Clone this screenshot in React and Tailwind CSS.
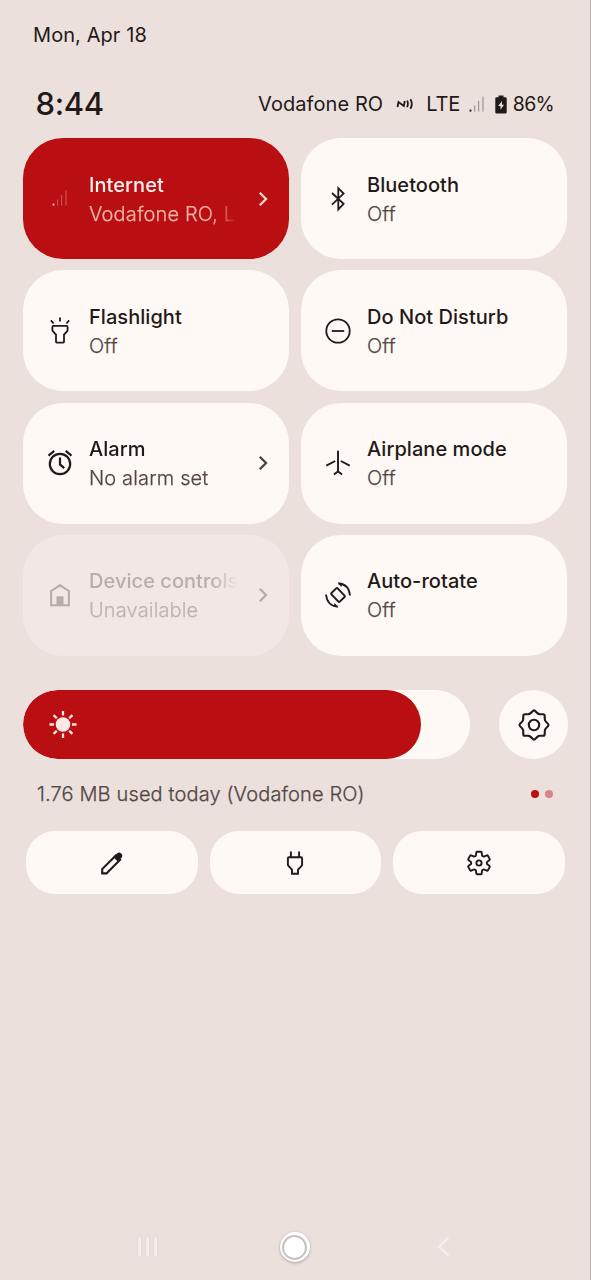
import React from "react";

function Icon({ size = 28, sw = 1.8, className = "", children }) {
  return (
    <svg
      width={size}
      height={size}
      viewBox={`0 0 ${size} ${size}`}
      fill="none"
      stroke="currentColor"
      strokeWidth={sw}
      className={`block shrink-0 ${className}`}
    >
      {children}
    </svg>
  );
}

const Signal = () => (
  <svg width="16" height="17" viewBox="0 0 16 17" fill="currentColor" className="block shrink-0">
    <rect x="0.6" y="13.6" width="1.8" height="2" />
    <rect x="5" y="9.4" width="1.2" height="6.2" opacity=".38" />
    <rect x="9" y="5" width="1.2" height="10.6" opacity=".38" />
    <rect x="13.4" y="0.5" width="1.2" height="15.1" opacity=".38" />
  </svg>
);

const Bluetooth = () => (
  <Icon sw={1.8}>
    <path d="M8 8l11.600 10.800-5.300 5.600V3.200l5.300 5.400L8 19.600" />
  </Icon>
);

const Flashlight = () => (
  <Icon>
    <path d="M7.400 8.900h13.200q1 0 1 1v3.200q0 .6-.4 1l-3.200 3.600v7q0 .9-.9.9h-6.200q-.9 0-.9-.9v-7l-3.200-3.600q-.4-.4-.4-1V9.900q0-1 1-1z" />
    <path d="M14 .6v3.800M4.900 3.300l2.700 3.200M23.100 3.300l-2.700 3.200" />
  </Icon>
);

const DoNotDisturb = () => (
  <Icon>
    <circle cx="14" cy="14" r="11.700" />
    <path d="M7.800 14h12.400" />
  </Icon>
);

const Alarm = () => (
  <Icon sw={2.2}>
    <circle cx="14" cy="15" r="10.200" />
    <path d="M2.500 6.600l5.800-4.700M25.500 6.600l-5.800-4.700M14 8.600v6.800l4.200 3.700" />
  </Icon>
);

const Airplane = () => (
  <Icon sw={1.9}>
    <path d="M14 1.800v21M2.300 16.600l8.900-4.600M25.700 16.600l-8.900-4.600M9.900 25.400l4.100-3 4.100 3" />
  </Icon>
);

const House = () => (
  <Icon sw={2}>
    <path d="M5.100 24.200V10L14 4.300 22.900 10v14.200z" />
    <path d="M10.500 15.300h7v9h-7z" fill="currentColor" stroke="none" />
  </Icon>
);

const AutoRotate = () => (
  <Icon sw={1.8}>
    <rect x="-6" y="-4.300" width="12" height="8.600" rx="1" transform="translate(14 14) rotate(46)" strokeWidth="2" />
    <path d="M14.500 2.500q10.300.6 11.500 12M2 13.500q1.200 11.400 11.500 12" />
    <path d="M13.600 1.600l5 .6-1.300 3.900zM14.400 26.400l-5-.6 1.300-3.900z" fill="currentColor" stroke="none" />
  </Icon>
);

const Sun = () => (
  <Icon sw={2.3}>
    <circle cx="14" cy="14.500" r="7.300" fill="currentColor" stroke="none" />
    <path d="M14 1v4.500M14 23.500v4.500M.5 14.500h4.500M23 14.500h4.500M4.600 5.100l3.200 3.200M20.200 20.700l3.200 3.200M23.400 5.100l-3.200 3.200M7.800 20.700l-3.200 3.200" />
  </Icon>
);

const at = (c, r, deg) => {
  const a = ((deg - 90) * Math.PI) / 180;
  return [c + r * Math.cos(a), c + r * Math.sin(a)];
};

// Closed polygon whose corners are softened by quadratic curves.
function softPath(points, t) {
  const n = points.length;
  const mix = (p, q, k) => `${(p[0] + (q[0] - p[0]) * k).toFixed(2)} ${(p[1] + (q[1] - p[1]) * k).toFixed(2)}`;
  return (
    points
      .map((p, i) => {
        const prev = points[(i + n - 1) % n];
        const next = points[(i + 1) % n];
        return `${i ? "L" : "M"}${mix(p, prev, t)}Q${p[0].toFixed(2)} ${p[1].toFixed(2)} ${mix(p, next, t)}`;
      })
      .join("") + "Z"
  );
}

const starPoints = Array.from({ length: 16 }, (_, i) => at(17, i % 2 ? 11.7 : 15.1, i * 22.5));
const gearPoints = Array.from({ length: 6 }, (_, i) => [
  at(14, 7.9, i * 60 - 23),
  at(14, 11.6, i * 60 - 13),
  at(14, 11.6, i * 60 + 13),
  at(14, 7.9, i * 60 + 23),
]).flat();

const StarGear = () => (
  <Icon size={34} sw={2.1}>
    <path d={softPath(starPoints, 0.25)} />
    <circle cx="17" cy="17" r="5.200" />
  </Icon>
);

const Gear = () => (
  <Icon sw={1.9}>
    <path d={softPath(gearPoints, 0.16)} />
    <circle cx="14" cy="14" r="2.600" />
  </Icon>
);

const Pencil = () => (
  <Icon sw={2.1}>
    <path d="M4.200 24.400v-4.300L17.800 6.500l4.300 4.300L8.500 24.400z" />
    <path d="M15.500 8.200l3.900-3.900q1.700-1.400 3.400 0l.9.900q1.400 1.700 0 3.400L19.800 12.500z" fill="currentColor" stroke="none" />
  </Icon>
);

const Plug = () => (
  <Icon sw={1.9}>
    <path d="M9.900 2.400v5.400M18.100 2.400v5.400M7.900 8.300h12.200q1 0 1 1v6.200q0 .8-.5 1.300L17 20.600v4.100h-6v-4.100l-3.600-3.800q-.5-.5-.5-1.300V9.300q0-1 1-1z" />
  </Icon>
);

const Nfc = () => (
  <svg width="18" height="12" viewBox="0 0 18 12" fill="none" stroke="currentColor" strokeWidth="1.800" className="block">
    <path d="M1.500 9l1-5 5.300 3.900L8.800 3M11.200 2.500q1.500 3.500-.2 6.700M14.400 1.200q2.900 4.800-.1 9.600" />
  </svg>
);

const Battery = () => (
  <svg width="12" height="19" viewBox="0 0 12 19" className="block">
    <path d="M3.500.4h5v1.900H10.500q1.200 0 1.200 1.200v13.800q0 1.200-1.200 1.200h-9q-1.200 0-1.200-1.200V3.500q0-1.200 1.200-1.200h2z" fill="currentColor" />
    <path d="M6.900 6.100L3.200 11h2.300v3.700l3.500-5H6.900z" fill="#ebe0dc" />
  </svg>
);

const Chevron = () => (
  <svg width="12" height="16" viewBox="0 0 12 16" fill="none" stroke="currentColor" strokeWidth="2.300" className="block shrink-0">
    <path d="M2.800 1.800l6.200 6.200-6.200 6.200" />
  </svg>
);

const tiles = [
  { icon: Signal, title: "Internet", sub: "Vodafone RO, L", look: "active", chevron: true },
  { icon: Bluetooth, title: "Bluetooth", sub: "Off" },
  { icon: Flashlight, title: "Flashlight", sub: "Off" },
  { icon: DoNotDisturb, title: "Do Not Disturb", sub: "Off" },
  { icon: Alarm, title: "Alarm", sub: "No alarm set", chevron: true },
  { icon: Airplane, title: "Airplane mode", sub: "Off" },
  { icon: House, title: "Device controls", sub: "Unavailable", look: "disabled", chevron: true },
  { icon: AutoRotate, title: "Auto-rotate", sub: "Off" },
];

const looks = {
  active: { box: "bg-[#b90e12]", icon: "text-[#f5c0b4]", title: "text-[#fff3ef]", sub: "text-[#f0b3a6]", chev: "text-[#ffd9d0]" },
  disabled: { box: "bg-[#f2e7e5]", icon: "text-[#b7abaa]", title: "text-[#b9adac]", sub: "text-[#bfb3b1]", chev: "text-[#b7abaa]" },
  normal: { box: "bg-[#fff9f5]", icon: "text-[#1f1a19]", title: "text-[#1f1a19]", sub: "text-[#534745]", chev: "text-[#4a4140]" },
};

function Tile({ icon: Glyph, title, sub, look = "normal", chevron }) {
  const c = looks[look];
  return (
    <div className={`flex h-[121px] items-center rounded-[40px] pl-[23px] ${c.box}`}>
      <div className={`flex w-7 shrink-0 justify-center ${c.icon}`}>
        <Glyph />
      </div>
      <div
        className={`ml-[15px] overflow-hidden pt-[2px] text-[20px] leading-[29px] whitespace-nowrap ${
          chevron ? "w-[149px] [mask-image:linear-gradient(to_right,black_122px,transparent_149px)]" : "flex-1"
        }`}
      >
        <div className={`font-medium tracking-[0.05px] ${c.title}`}>{title}</div>
        <div className={`font-light tracking-[0.15px] [-webkit-text-stroke:0.25px_currentColor] ${c.sub}`}>{sub}</div>
      </div>
      {chevron && (
        <div className={`ml-[19px] ${c.chev}`}>
          <Chevron />
        </div>
      )}
    </div>
  );
}

export default function App() {
  return (
    <div className="flex h-[1280px] w-[591px] flex-col border-r border-[#b9adac] bg-[#ebe0dc] font-['Inter',sans-serif] text-[#1f1a19]">
      <div className="pt-[20px] pl-[33px] text-[20px] leading-[30px] tracking-[0.08px]">Mon, Apr 18</div>

      <div className="mt-[34px] flex h-10 items-center pr-[36px] pl-[35.5px]">
        <span className="text-[31px] leading-10 font-medium tracking-[-0.3px]">8:44</span>
        <div className="ml-auto flex items-center text-[20px] leading-[30px]">
          <span className="tracking-[0.08px]">Vodafone RO</span>
          <span className="ml-[13px]"><Nfc /></span>
          <span className="ml-[12px] tracking-[-0.1px]">LTE</span>
          <span className="ml-[9px]"><Signal /></span>
          <span className="ml-[10px]"><Battery /></span>
          <span className="ml-[5.5px] text-[19.5px] tracking-[-0.7px]">86%</span>
        </div>
      </div>

      <div className="mt-[14px] ml-[23px] grid w-[544px] grid-cols-2 gap-x-[12px] gap-y-[11.33px]">
        {tiles.map((t) => (
          <Tile key={t.title} {...t} />
        ))}
      </div>

      <div className="mt-[34px] ml-[23px] flex w-[545px] justify-between">
        <div className="h-[69px] w-[447px] overflow-hidden rounded-full bg-[#fff9f5]">
          <div className="flex h-full w-[398px] items-center rounded-full bg-[#b90e12] pl-[26px] text-[#fbe9e6]">
            <Sun />
          </div>
        </div>
        <div className="flex size-[69px] items-center justify-center rounded-full bg-[#fff9f5] pt-px">
          <StarGear />
        </div>
      </div>

      <div className="mt-5 flex h-[30px] items-center justify-between pr-[37px] pl-[37px] text-[20px] leading-[30px] text-[#534745]">
        <span className="font-light tracking-[0.14px] [-webkit-text-stroke:0.25px_currentColor]">1.76 MB used today (Vodafone RO)</span>
        <div className="flex gap-[6px]">
          <span className="size-2 rounded-full bg-[#b90e12]" />
          <span className="size-2 rounded-full bg-[#d98489]" />
        </div>
      </div>

      <div className="mt-[22px] ml-[26px] grid w-[539px] grid-cols-3 gap-[12px]">
        {[Pencil, Plug, Gear].map((Glyph, i) => (
          <div key={i} className="flex h-[63px] items-center justify-center rounded-[29px] bg-[#fff9f5] pt-px">
            <Glyph />
          </div>
        ))}
      </div>

      <div className="mt-auto mb-[13px] flex h-10 items-center justify-between pr-[139px] pl-[138px]">
        <div className="flex w-[22px] gap-[5px]">
          {[0, 1, 2].map((i) => (
            <span key={i} className="h-5 w-[3px] rounded-full bg-[#f4edea] shadow-[0_0_2px_#cfc4c2]" />
          ))}
        </div>
        <span className="mr-[6px] flex size-[30px] items-center justify-center rounded-full bg-white shadow-[0_1px_3px_#a79c9a]">
          <span className="size-[25px] rounded-full border-2 border-[#c6c1bf] bg-white" />
        </span>
        <svg width="16" height="22" viewBox="0 0 16 22" fill="none" className="block">
          <path d="M13.500 2.600l-9.500 9 9.500 9" stroke="#d8ceca" strokeWidth="2.400" />
          <path d="M13.500 2l-9.500 9 9.500 9" stroke="#f6efed" strokeWidth="2.600" />
        </svg>
      </div>
    </div>
  );
}
